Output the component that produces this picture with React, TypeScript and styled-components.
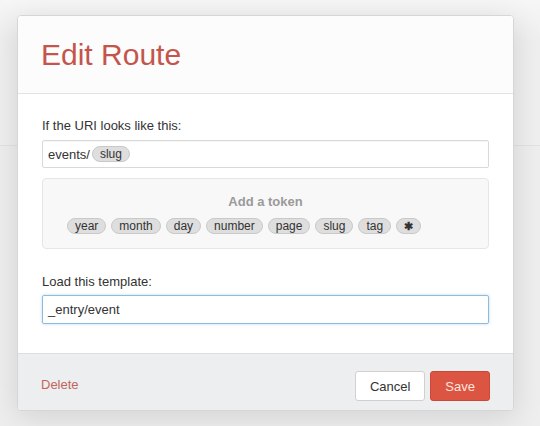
import * as React from 'react';
import styled, { createGlobalStyle } from 'styled-components';

const GlobalStyle = createGlobalStyle`
    html, body {
        margin: 0;
        padding: 0;
        background: #f0f0f0;
        font-family: "Liberation Sans", Arial, sans-serif;
        color: #333;
    }
`;

const Page = styled.div`
    position: relative;
    width: 540px;
    height: 426px;
    overflow: hidden;
    background: #eeeeee;
`;

const Backdrop = styled.div`
    height: 145px;
    background: linear-gradient(#f6f6f6, #efefef 40px);
    border-bottom: 1px solid #e2e2e2;
`;

const Modal = styled.div`
    position: absolute;
    top: 15px;
    left: 17px;
    width: 495px;
    border: 1px solid #d6d6d6;
    border-radius: 4px;
    background: #fff;
    box-shadow: 0 6px 30px rgba(0, 0, 0, 0.12);
    overflow: hidden;
`;

const ModalHeader = styled.div`
    padding: 21px 24px 20px 23px;
    background: #fcfcfc;
    border-bottom: 1px solid #e3e3e3;
`;

const Title = styled.h1`
    margin: 0;
    font-size: 30px;
    line-height: 36px;
    font-weight: normal;
    color: #c4554b;
`;

const ModalBody = styled.div`
    padding: 24px 24px 29px;
`;

const Label = styled.div`
    font-size: 13px;
    line-height: 16px;
    margin-bottom: ${({ $gap }: { $gap: number }) => $gap}px;
`;

const Input = styled.div<{ $focused?: boolean }>`
    display: flex;
    align-items: center;
    box-sizing: border-box;
    padding: 0 5px;
    font-size: 13px;
    color: #333;
    border: 1px solid ${({ $focused }) => ($focused ? '#8dbbd9' : '#d9d9d9')};
    border-radius: 2px;
    box-shadow: ${({ $focused }) =>
        $focused ? '0 0 3px rgba(82, 168, 236, 0.45)' : 'inset 0 1px 1px rgba(0, 0, 0, 0.04)'};
    height: ${({ $focused }) => ($focused ? 29 : 28)}px;
`;

const TokenPanel = styled.div`
    margin: 10px 0 25px;
    padding: 15px 24px 14px;
    background: #f8f8f8;
    border: 1px solid #e6e6e6;
    border-radius: 4px;
`;

const PanelTitle = styled.div`
    text-align: center;
    font-size: 13px;
    line-height: 16px;
    font-weight: bold;
    color: #9a9a9a;
    margin-bottom: 8px;
`;

const TokenRow = styled.div`
    display: flex;
    gap: 5px;
`;

const Token = styled.span<{ $inline?: boolean }>`
    display: inline-block;
    height: 16px;
    box-sizing: border-box;
    padding: 0 7px;
    font-size: 12px;
    line-height: 14px;
    color: #333;
    background: #dedede;
    border: 1px solid #c9c9c9;
    border-radius: 9px;
    margin-left: ${({ $inline }) => ($inline ? 2 : 0)}px;
`;

const Star = styled(Token)`
    font-weight: bold;
    font-size: 11px;
    padding: 0 7px;
`;

const ModalFooter = styled.div`
    display: flex;
    align-items: flex-start;
    justify-content: space-between;
    height: 57px;
    box-sizing: border-box;
    padding: 17px 23px 0 23px;
    background: #edeeef;
    border-top: 1px solid #dedede;
`;

const DeleteLink = styled.a`
    margin-top: 6px;
    font-size: 13px;
    color: #c2655d;
    text-decoration: none;
`;

const Buttons = styled.div`
    display: flex;
    gap: 5px;
`;

const Button = styled.button<{ $primary?: boolean }>`
    height: 30px;
    padding: 0 14px;
    font-family: "Liberation Sans", Arial, sans-serif;
    font-size: 13px;
    border-radius: 3px;
    border: 1px solid ${({ $primary }) => ($primary ? '#c9483a' : '#d0d0d0')};
    background: ${({ $primary }) => ($primary ? '#dc5442' : '#fff')};
    color: ${({ $primary }) => ($primary ? '#ffe6df' : '#333')};
`;

const tokens = ['year', 'month', 'day', 'number', 'page', 'slug', 'tag'];

export default function App() {
    return (
        <Page>
            <GlobalStyle />
            <Backdrop />
            <Modal>
                <ModalHeader>
                    <Title>Edit Route</Title>
                </ModalHeader>
                <ModalBody>
                    <Label $gap={6}>If the URI looks like this:</Label>
                    <Input>
                        events/<Token $inline>slug</Token>
                    </Input>
                    <TokenPanel>
                        <PanelTitle>Add a token</PanelTitle>
                        <TokenRow>
                            {tokens.map((t) => (
                                <Token key={t}>{t}</Token>
                            ))}
                            <Star>✱</Star>
                        </TokenRow>
                    </TokenPanel>
                    <Label $gap={5}>Load this template:</Label>
                    <Input $focused>_entry/event</Input>
                </ModalBody>
                <ModalFooter>
                    <DeleteLink href="#">Delete</DeleteLink>
                    <Buttons>
                        <Button>Cancel</Button>
                        <Button $primary>Save</Button>
                    </Buttons>
                </ModalFooter>
            </Modal>
        </Page>
    );
}
